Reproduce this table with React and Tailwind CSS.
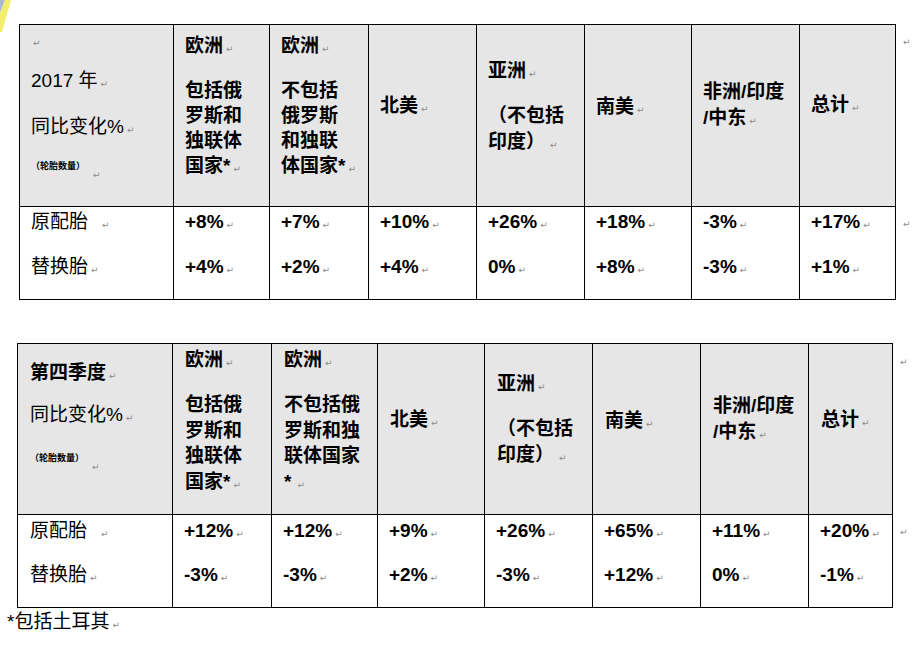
import React from 'react';

const font = "font-['Liberation_Sans','Noto_Sans_CJK_SC',sans-serif]";

const Mark = ({ className = 'ml-[3px]' }) => (
    <span className={`font-['DejaVu_Sans',sans-serif] text-[9px] font-normal text-[#8a8a8a] ${className}`}>↵</span>
);

const Line = ({ children, className = '', lh = 'h-[25px] leading-[25px]' }) => (
    <div className={`whitespace-nowrap ${lh} ${className}`}>{children}</div>
);

const Body = ({ a, b, pad, gap }) => (
    <div className={`bg-white pl-[11px] text-[19px] font-bold ${pad}`}>
        <Line>{a}<Mark /></Line>
        <Line className={gap}>{b}<Mark /></Line>
    </div>
);

const Small = ({ className }) => (
    <div className={`whitespace-nowrap text-[9px] font-bold leading-[14px] ${className}`}>
        （轮胎数量）<Mark className="ml-[8px] align-[-9px]" />
    </div>
);

const Corner = () => (
    <svg className="absolute left-0 top-0" width="14" height="34" viewBox="0 0 14 34">
        <polygon points="0,0 5,0 0,13" fill="#aab8d2" />
        <polygon points="5,0 11,0 2,32 0,32 0,13" fill="#f2ee6e" />
    </svg>
);

const totals2017 = [
    ['+8%', '+4%'], ['+7%', '+2%'], ['+10%', '+4%'], ['+26%', '0%'],
    ['+18%', '+8%'], ['-3%', '-3%'], ['+17%', '+1%'],
];

const totalsQ4 = [
    ['+12%', '-3%'], ['+12%', '-3%'], ['+9%', '+2%'], ['+26%', '-3%'],
    ['+65%', '+12%'], ['+11%', '0%'], ['+20%', '-1%'],
];

const App = () => {
    const head = 'bg-[#e6e6e6] pl-[11px] text-[19px] font-bold';
    const head2 = 'bg-[#e6e6e6] pl-[12px] text-[19px] font-bold';
    const lh2 = 'h-[25.7px] leading-[25.7px]';
    const lh26 = 'h-[26px] leading-[26px]';

    return (
        <div className={`relative h-[647px] w-[922px] overflow-hidden bg-white pt-[24px] text-black ${font}`}>
            <Corner />

            {/* 2017 */}
            <div className="ml-[19px] flex">
                <div className="grid w-fit grid-cols-[153px_95px_98px_107px_107px_106px_107px_95px] grid-rows-[181px_92px] gap-px border border-black bg-black">
                    <div className="bg-[#e6e6e6] pl-[11px] pt-[2px] text-[19px]">
                        <Line className="pl-[2px]"><Mark className="" /></Line>
                        <Line className="mt-[16px]">2017 年<Mark /></Line>
                        <Line className="mt-[21px]">同比变化%<Mark /></Line>
                        <Small className="mt-[20px]" />
                    </div>
                    <div className={`${head} pt-[8px]`}>
                        <Line>欧洲<Mark /></Line>
                        <Line className="mt-[20px]">包括俄</Line>
                        <Line>罗斯和</Line>
                        <Line>独联体</Line>
                        <Line>国家*<Mark /></Line>
                    </div>
                    <div className={`${head} pt-[8px]`}>
                        <Line>欧洲<Mark /></Line>
                        <Line className="mt-[20px]">不包括</Line>
                        <Line>俄罗斯</Line>
                        <Line>和独联</Line>
                        <Line>体国家*<Mark /></Line>
                    </div>
                    <div className={`${head} pt-[68px]`}>
                        <Line>北美<Mark /></Line>
                    </div>
                    <div className={`${head} pt-[33px]`}>
                        <Line>亚洲<Mark /></Line>
                        <Line className="mt-[20px]" lh={lh26}>（不包括</Line>
                        <Line lh={lh26}>印度）<Mark className="ml-[5px]" /></Line>
                    </div>
                    <div className={`${head} pt-[69px]`}>
                        <Line>南美<Mark /></Line>
                    </div>
                    <div className={`${head} pt-[54px]`}>
                        <Line lh={lh26}>非洲/印度</Line>
                        <Line lh={lh26}>/中东<Mark /></Line>
                    </div>
                    <div className={`${head} pt-[67px]`}>
                        <Line>总计<Mark /></Line>
                    </div>

                    <div className="bg-white pl-[11px] pt-[2px] text-[19px]">
                        <Line>原配胎<Mark className="ml-[14px]" /></Line>
                        <Line className="mt-[20px]">替换胎<Mark /></Line>
                    </div>
                    {totals2017.map(([a, b], i) => (
                        <Body key={i} a={a} b={b} pad="pt-[2px]" gap="mt-[20px]" />
                    ))}
                </div>
                <div className="ml-[7px] flex flex-col leading-[12px]">
                    <div className="h-[182px] pt-[10px]"><Mark className="" /></div>
                    <div className="pt-[10px]"><Mark className="" /></div>
                </div>
            </div>

            {/* Q4 */}
            <div className="ml-[17px] mt-[43px] flex">
                <div className="grid w-fit grid-cols-[154px_98px_105px_106px_107px_107px_107px_83px] grid-rows-[170px_92px] gap-px border border-black bg-black">
                    <div className="bg-[#e6e6e6] pl-[12px] pt-[16px] text-[19px]">
                        <Line className="font-bold">第四季度<Mark /></Line>
                        <Line className="mt-[17px]">同比变化%<Mark /></Line>
                        <Small className="mt-[24px]" />
                    </div>
                    <div className={`${head2} pt-[3px]`}>
                        <Line>欧洲<Mark /></Line>
                        <Line className="mt-[20px]" lh={lh2}>包括俄</Line>
                        <Line lh={lh2}>罗斯和</Line>
                        <Line lh={lh2}>独联体</Line>
                        <Line lh={lh2}>国家*<Mark /></Line>
                    </div>
                    <div className={`${head2} pt-[3px]`}>
                        <Line>欧洲<Mark /></Line>
                        <Line className="mt-[20px]" lh={lh2}>不包括俄</Line>
                        <Line lh={lh2}>罗斯和独</Line>
                        <Line lh={lh2}>联体国家</Line>
                        <Line lh={lh2}>*<Mark className="ml-[6px]" /></Line>
                    </div>
                    <div className={`${head2} pt-[63px]`}>
                        <Line>北美<Mark /></Line>
                    </div>
                    <div className={`${head2} pt-[27px]`}>
                        <Line>亚洲<Mark /></Line>
                        <Line className="mt-[20px]" lh={lh26}>（不包括</Line>
                        <Line lh={lh26}>印度）<Mark className="ml-[5px]" /></Line>
                    </div>
                    <div className={`${head2} pt-[64px]`}>
                        <Line>南美<Mark /></Line>
                    </div>
                    <div className={`${head2} pt-[49px]`}>
                        <Line lh={lh26}>非洲/印度</Line>
                        <Line lh={lh26}>/中东<Mark /></Line>
                    </div>
                    <div className={`${head2} pt-[63px]`}>
                        <Line>总计<Mark /></Line>
                    </div>

                    <div className="bg-white pl-[12px] pt-[3px] text-[19px]">
                        <Line>原配胎<Mark className="ml-[14px]" /></Line>
                        <Line className="mt-[19px]">替换胎<Mark /></Line>
                    </div>
                    {totalsQ4.map(([a, b], i) => (
                        <Body key={i} a={a} b={b} pad="pt-[3px]" gap="mt-[19px]" />
                    ))}
                </div>
                <div className="ml-[7px] flex flex-col leading-[12px]">
                    <div className="h-[171px] pt-[11px]"><Mark className="" /></div>
                    <div className="pt-[10px]"><Mark className="" /></div>
                </div>
            </div>

            <div className="ml-[7px] mt-[1px] whitespace-nowrap text-[19px] leading-[25px]">
                *包括土耳其<Mark />
            </div>
        </div>
    );
};

export default App;
